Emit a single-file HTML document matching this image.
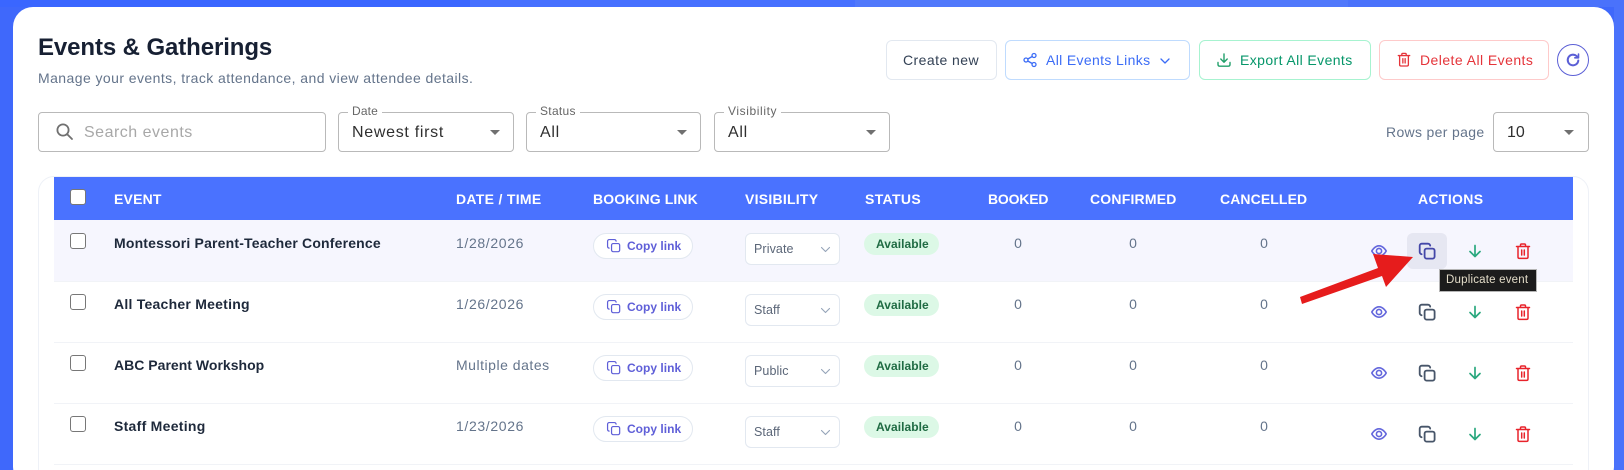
<!DOCTYPE html>
<html lang="en"><head><meta charset="utf-8"><title>Events &amp; Gatherings</title>
<style>
*{box-sizing:border-box;margin:0;padding:0}
html,body{width:1624px;height:470px;overflow:hidden}
body{background:#3f68fb;font-family:"Liberation Sans",sans-serif;position:relative}
.a,.t,.row>*{position:absolute}
.t{white-space:nowrap;line-height:20px}
.seg{position:absolute;top:0;height:7px}
.card{position:absolute;left:13px;top:7px;width:1601px;height:480px;background:#fff;border-radius:20px}
.btn{position:absolute;top:40px;height:40px;border:1px solid;border-radius:6px;background:#fff}
.fld{position:absolute;top:112px;height:40px;border:1px solid #b9b9b9;border-radius:4px;background:#fff}
.lab{position:absolute;top:104px;height:14px;line-height:14px;font-size:12px;color:#666;background:#fff;padding:0 4px;white-space:nowrap;letter-spacing:.15px}
.val{position:absolute;top:123px;line-height:20px;font-size:16px;color:#2f2f2f;white-space:nowrap;letter-spacing:.7px}
.caret{position:absolute;top:130px;width:0;height:0;border-left:5px solid transparent;border-right:5px solid transparent;border-top:5px solid #707070}
.th{position:absolute;top:189px;line-height:20px;font-size:14px;font-weight:700;color:#fff;white-space:nowrap}
.row{position:absolute;left:54px;width:1519px;height:62px;border-bottom:1px solid #f1f3f7}
.cb{left:16px;top:13px;width:16px;height:16px;border:1.3px solid #777;border-radius:3px;background:#fff}
.nm{left:60px;top:13px;line-height:20px;font-size:14px;font-weight:700;color:#1e293b;white-space:nowrap}
.dt{left:402px;top:13px;line-height:20px;font-size:14px;color:#64748b;white-space:nowrap;letter-spacing:.64px}
.cp{left:539px;top:13px;width:100px;height:26px;border:1px solid #e2e8f0;border-radius:13px;background:#fff}
.cpt{left:573px;top:16px;line-height:20px;font-size:12px;font-weight:700;color:#5f5fd8;white-space:nowrap;letter-spacing:.02px}
.sel{left:691px;top:13px;width:95px;height:32px;border:1px solid #e2e8f0;border-radius:6px;background:#fff}
.selt{left:700px;top:19px;line-height:20px;font-size:12.5px;color:#5b6678;white-space:nowrap;letter-spacing:.1px}
.bd{left:810px;top:13px;width:75px;height:22px;border-radius:11px;background:#dcf8e6}
.bdt{left:822px;top:14px;line-height:20px;font-size:12px;font-weight:700;color:#1f6b43;white-space:nowrap;letter-spacing:.05px}
.n{top:13px;line-height:20px;font-size:14px;color:#64748b;width:20px;text-align:center}
svg{position:absolute;overflow:visible;fill:none;stroke-linecap:round;stroke-linejoin:round}
.i{top:23px;width:16px;height:16px}
</style></head>
<body>
<div class="seg" style="left:0;width:470px;background:#3a66ff"></div>
<div class="seg" style="left:470px;width:385px;background:#4670ff"></div>
<div class="seg" style="left:855px;width:493px;background:#5078fb"></div>
<div class="seg" style="left:1348px;width:276px;background:#4a72fb"></div>
<div class="a" style="left:1614px;top:0;width:10px;height:470px;background:#4a72fb"></div>
<div class="card"></div>

<svg width="0" height="0" style="position:absolute">
<defs>
<g id="copy"><rect x="5.6" y="5.6" width="10" height="10" rx="2"/><path d="M2.6 11.2C1.5 11 .7 10 .7 9V2.7C.7 1.6 1.6.7 2.7.7H9c1 0 2 .8 2.2 1.9"/></g>
<g id="eye"><path d="M.8 8s2.700-5.200 7.200-5.200S15.200 8 15.200 8 12.500 13.200 8 13.200.8 8 .8 8z"/><circle cx="8" cy="8" r="2.600"/></g>
<g id="down"><path d="M8 2.500v11M3 8.500l5 5 5-5"/></g>
<g id="trash"><path d="M1.500 3.500h13M5.500 3.500V2c0-.6.4-1 1-1h3c.6 0 1 .4 1 1v1.500M3 3.500V14c0 .8.6 1.400 1.400 1.400h7.200c.8 0 1.400-.6 1.400-1.400V3.500M6.700 7v5M9.300 7v5"/></g>
</defs>
</svg>

<div class="t" style="left:38px;top:33px;line-height:30px;font-size:24px;font-weight:700;color:#172033;letter-spacing:-.1px">Events &amp; Gatherings</div>
<div class="t" style="left:38px;top:68px;font-size:14px;color:#64748b;letter-spacing:.43px">Manage your events, track attendance, and view attendee details.</div>

<div class="btn" style="left:886px;width:111px;border-color:#e2e8f0"></div>
<div class="t" style="left:903px;top:50px;font-size:14px;color:#334155;letter-spacing:.45px">Create new</div>
<div class="btn" style="left:1005px;width:185px;border-color:#bfdbfe"></div>
<svg style="left:1023px;top:53px" width="14" height="14" viewBox="0 0 14 14" stroke="#3b6cf6" stroke-width="1.300"><circle cx="11" cy="2.500" r="2"/><circle cx="3" cy="7" r="2"/><circle cx="11" cy="11.500" r="2"/><path d="M4.800 6 9.200 3.500M4.800 8l4.400 2.500"/></svg>
<div class="t" style="left:1046px;top:50px;font-size:14px;color:#3b6cf6;letter-spacing:.35px">All Events Links</div>
<svg style="left:1160px;top:58px" width="10" height="6" viewBox="0 0 10 6" stroke="#3b6cf6" stroke-width="1.300"><path d="M1 1l4 4 4-4"/></svg>
<div class="btn" style="left:1199px;width:172px;border-color:#a7f3d0"></div>
<svg style="left:1217px;top:53px" width="14" height="14" viewBox="0 0 14 14" stroke="#22a06b" stroke-width="1.400"><path d="M7 1v8M3.800 6 7 9.200 10.200 6M1 9.500v2c0 1 .7 1.700 1.700 1.700h8.600c1 0 1.700-.7 1.700-1.700v-2"/></svg>
<div class="t" style="left:1240px;top:50px;font-size:14px;color:#059669;letter-spacing:.4px">Export All Events</div>
<div class="btn" style="left:1379px;width:170px;border-color:#fecaca"></div>
<svg style="left:1397px;top:52px" width="14" height="15" viewBox="0 0 16 16" stroke="#e5343a" stroke-width="1.500"><use href="#trash"/></svg>
<div class="t" style="left:1420px;top:50px;font-size:14px;color:#e5343a;letter-spacing:.44px">Delete All Events</div>
<div class="a" style="left:1557px;top:44px;width:32px;height:32px;border:1px solid #5b5fd6;border-radius:50%"></div>
<svg style="left:1566px;top:53px" width="14" height="14" viewBox="0 0 14 14" stroke="#5b5fd6" stroke-width="2"><path d="M12.300 7.500A5.300 5.300 0 1 1 10.500 3L12 4.300"/><path d="M12.500 1v3.800H8.800" stroke-width="1.600"/></svg>

<div class="fld" style="left:38px;width:288px"></div>
<svg style="left:55px;top:122px" width="19" height="19" viewBox="0 0 19 19" stroke="#707070" stroke-width="1.800"><circle cx="8" cy="8" r="5.600"/><path d="M12.200 12.200 17 17"/></svg>
<div class="t" style="left:84px;top:123px;font-size:16px;color:#a8a8a8;letter-spacing:.5px">Search events</div>

<div class="fld" style="left:338px;width:176px"></div>
<div class="lab" style="left:348px">Date</div>
<div class="val" style="left:352px">Newest first</div>
<div class="caret" style="left:490px"></div>

<div class="fld" style="left:526px;width:175px"></div>
<div class="lab" style="left:536px;letter-spacing:.3px">Status</div>
<div class="val" style="left:540px">All</div>
<div class="caret" style="left:677px"></div>

<div class="fld" style="left:714px;width:176px"></div>
<div class="lab" style="left:724px;letter-spacing:.6px">Visibility</div>
<div class="val" style="left:728px">All</div>
<div class="caret" style="left:866px"></div>

<div class="t" style="left:1386px;top:122px;font-size:14px;color:#64748b;letter-spacing:.33px">Rows per page</div>
<div class="fld" style="left:1493px;width:96px"></div>
<div class="val" style="left:1507px;letter-spacing:0">10</div>
<div class="caret" style="left:1564px"></div>

<div class="a" style="left:38px;top:176px;width:1551px;height:310px;border:1px solid #eef1f7;border-radius:16px"></div>
<div class="a" style="left:54px;top:177px;width:1519px;height:43px;background:#4a72ff"></div>
<div class="a" style="left:70px;top:189px;width:16px;height:16px;background:#fff;border:1.300px solid #777;border-radius:3px"></div>
<div class="th" style="left:114px;letter-spacing:.2px">EVENT</div>
<div class="th" style="left:456px;letter-spacing:.3px">DATE / TIME</div>
<div class="th" style="left:593px;letter-spacing:.12px">BOOKING LINK</div>
<div class="th" style="left:745px;letter-spacing:.25px">VISIBILITY</div>
<div class="th" style="left:865px;letter-spacing:.35px">STATUS</div>
<div class="th" style="left:988px;letter-spacing:-.2px">BOOKED</div>
<div class="th" style="left:1090px;letter-spacing:.2px">CONFIRMED</div>
<div class="th" style="left:1220px;letter-spacing:.1px">CANCELLED</div>
<div class="th" style="left:1418px;letter-spacing:.35px">ACTIONS</div>

<div class="row" style="top:220px;background:#f6f6fe">
<div class="cb"></div><div class="nm" style="letter-spacing:.18px">Montessori Parent-Teacher Conference</div><div class="dt">1/28/2026</div>
<div class="cp"></div><svg style="left:553px;top:19px" width="13" height="13" viewBox="0 0 16 16" stroke="#5f5fd8" stroke-width="1.500"><use href="#copy"/></svg><div class="cpt">Copy link</div>
<div class="sel"></div><div class="selt">Private</div><svg style="left:767px;top:27px" width="9" height="5" viewBox="0 0 9 5" stroke="#94a3b8" stroke-width="1.100"><path d="M.5.500l4 4 4-4"/></svg>
<div class="bd"></div><div class="bdt">Available</div>
<div class="n" style="left:954px">0</div><div class="n" style="left:1069px">0</div><div class="n" style="left:1200px">0</div>
<div style="left:1353px;top:13px;width:40px;height:36px;background:#e6e7f2;border-radius:6px"></div>
<svg class="i" style="left:1317px" viewBox="0 0 16 16" stroke="#6366dc" stroke-width="1.600"><use href="#eye"/></svg>
<svg class="i" style="left:1365px" viewBox="0 0 16 16" stroke="#4447a8" stroke-width="1.800"><use href="#copy"/></svg>
<svg class="i" style="left:1413px" viewBox="0 0 16 16" stroke="#2aa87e" stroke-width="1.700"><use href="#down"/></svg>
<svg class="i" style="left:1461px" viewBox="0 0 16 16" stroke="#e8232b" stroke-width="1.500"><use href="#trash"/></svg>
</div>

<div class="row" style="top:281px">
<div class="cb"></div><div class="nm" style="letter-spacing:.24px">All Teacher Meeting</div><div class="dt">1/26/2026</div>
<div class="cp"></div><svg style="left:553px;top:19px" width="13" height="13" viewBox="0 0 16 16" stroke="#5f5fd8" stroke-width="1.500"><use href="#copy"/></svg><div class="cpt">Copy link</div>
<div class="sel"></div><div class="selt">Staff</div><svg style="left:767px;top:27px" width="9" height="5" viewBox="0 0 9 5" stroke="#94a3b8" stroke-width="1.100"><path d="M.5.500l4 4 4-4"/></svg>
<div class="bd"></div><div class="bdt">Available</div>
<div class="n" style="left:954px">0</div><div class="n" style="left:1069px">0</div><div class="n" style="left:1200px">0</div>
<svg class="i" style="left:1317px" viewBox="0 0 16 16" stroke="#6366dc" stroke-width="1.600"><use href="#eye"/></svg>
<svg class="i" style="left:1365px" viewBox="0 0 16 16" stroke="#475569" stroke-width="1.800"><use href="#copy"/></svg>
<svg class="i" style="left:1413px" viewBox="0 0 16 16" stroke="#2aa87e" stroke-width="1.700"><use href="#down"/></svg>
<svg class="i" style="left:1461px" viewBox="0 0 16 16" stroke="#e8232b" stroke-width="1.500"><use href="#trash"/></svg>
</div>

<div class="row" style="top:342px">
<div class="cb"></div><div class="nm" style="letter-spacing:.02px">ABC Parent Workshop</div><div class="dt" style="letter-spacing:.52px">Multiple dates</div>
<div class="cp"></div><svg style="left:553px;top:19px" width="13" height="13" viewBox="0 0 16 16" stroke="#5f5fd8" stroke-width="1.500"><use href="#copy"/></svg><div class="cpt">Copy link</div>
<div class="sel"></div><div class="selt">Public</div><svg style="left:767px;top:27px" width="9" height="5" viewBox="0 0 9 5" stroke="#94a3b8" stroke-width="1.100"><path d="M.5.500l4 4 4-4"/></svg>
<div class="bd"></div><div class="bdt">Available</div>
<div class="n" style="left:954px">0</div><div class="n" style="left:1069px">0</div><div class="n" style="left:1200px">0</div>
<svg class="i" style="left:1317px" viewBox="0 0 16 16" stroke="#6366dc" stroke-width="1.600"><use href="#eye"/></svg>
<svg class="i" style="left:1365px" viewBox="0 0 16 16" stroke="#475569" stroke-width="1.800"><use href="#copy"/></svg>
<svg class="i" style="left:1413px" viewBox="0 0 16 16" stroke="#2aa87e" stroke-width="1.700"><use href="#down"/></svg>
<svg class="i" style="left:1461px" viewBox="0 0 16 16" stroke="#e8232b" stroke-width="1.500"><use href="#trash"/></svg>
</div>

<div class="row" style="top:403px">
<div class="cb"></div><div class="nm" style="letter-spacing:.28px">Staff Meeting</div><div class="dt">1/23/2026</div>
<div class="cp"></div><svg style="left:553px;top:19px" width="13" height="13" viewBox="0 0 16 16" stroke="#5f5fd8" stroke-width="1.500"><use href="#copy"/></svg><div class="cpt">Copy link</div>
<div class="sel"></div><div class="selt">Staff</div><svg style="left:767px;top:27px" width="9" height="5" viewBox="0 0 9 5" stroke="#94a3b8" stroke-width="1.100"><path d="M.5.500l4 4 4-4"/></svg>
<div class="bd"></div><div class="bdt">Available</div>
<div class="n" style="left:954px">0</div><div class="n" style="left:1069px">0</div><div class="n" style="left:1200px">0</div>
<svg class="i" style="left:1317px" viewBox="0 0 16 16" stroke="#6366dc" stroke-width="1.600"><use href="#eye"/></svg>
<svg class="i" style="left:1365px" viewBox="0 0 16 16" stroke="#475569" stroke-width="1.800"><use href="#copy"/></svg>
<svg class="i" style="left:1413px" viewBox="0 0 16 16" stroke="#2aa87e" stroke-width="1.700"><use href="#down"/></svg>
<svg class="i" style="left:1461px" viewBox="0 0 16 16" stroke="#e8232b" stroke-width="1.500"><use href="#trash"/></svg>
</div>

<div class="a" style="left:1439px;top:269px;width:98px;height:23px;background:#1c1c1c;border:1px solid #b5b5b5"></div>
<div class="t" style="left:1446px;top:270px;font-size:11.500px;color:#e3dcc8;letter-spacing:.2px">Duplicate event</div>

<svg style="left:0;top:0" width="1624" height="470"><polygon points="1300,297 1378,268 1373,254 1413,257 1386,287 1382,276 1302,304" fill="#e61c1c"/></svg>
</body></html>
